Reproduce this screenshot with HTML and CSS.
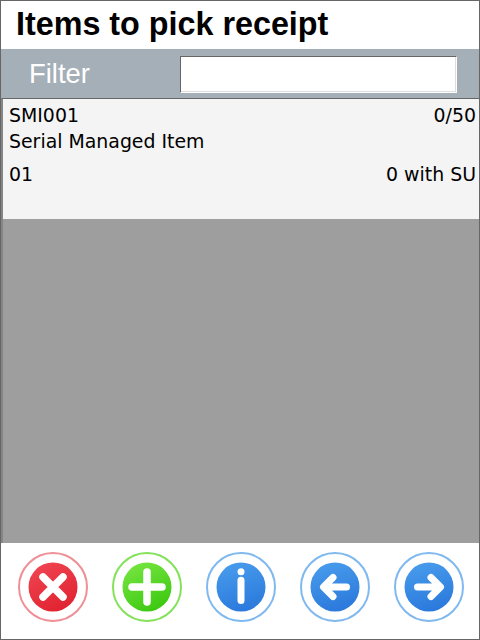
FILE: index.html
```html
<!DOCTYPE html>
<html lang="en">
<head>
  <meta charset="UTF-8">
  <meta name="viewport" content="width=device-width, initial-scale=1.0">
  <title>Items to pick receipt</title>
  <link rel="stylesheet" href="styles.css">
</head>
<body>
<div class="app">
  <!-- title -->
  <div class="header">Items to pick receipt</div>

  <!-- filter -->
  <div class="filter-bar">
    <label class="filter-label" for="filter">Filter</label>
    <input class="filter-input" id="filter" type="text">
  </div>

  <!-- list -->
  <div class="list">
    <div class="item">
      <div class="item-row">
        <span>SMI001</span>
        <span>0/50</span>
      </div>
      <div class="item-row">
        <span>Serial Managed Item</span>
      </div>
      <div class="item-row item-row-gap">
        <span>01</span>
        <span>0 with SU</span>
      </div>
    </div>
  </div>

  <!-- buttons -->
  <div class="toolbar">
    <button class="round-btn ring-red" type="button" aria-label="Cancel">
      <svg width="70" height="70" viewBox="0 0 70 70">
        <defs>
          <linearGradient id="redFill" x1="0.25" y1="0" x2="0.75" y2="1">
            <stop offset="0" stop-color="#f04451"/>
            <stop offset="1" stop-color="#e0212f"/>
          </linearGradient>
        </defs>
        <circle cx="35" cy="35" r="34" class="ring"/>
        <circle cx="35" cy="35" r="24.5" fill="url(#redFill)"/>
        <path d="M25 25 L45 45 M45 25 L25 45" class="glyph" stroke-width="7.5"/>
      </svg>
    </button>
    <button class="round-btn ring-green" type="button" aria-label="Add">
      <svg width="70" height="70" viewBox="0 0 70 70">
        <defs>
          <linearGradient id="greenFill" x1="0.25" y1="0" x2="0.75" y2="1">
            <stop offset="0" stop-color="#76e540"/>
            <stop offset="1" stop-color="#3ac70f"/>
          </linearGradient>
        </defs>
        <circle cx="35" cy="35" r="34" class="ring"/>
        <circle cx="35" cy="35" r="24.5" fill="url(#greenFill)"/>
        <path d="M35 20 V50 M20 35 H50" class="glyph" stroke-width="7.5"/>
      </svg>
    </button>
    <button class="round-btn ring-blue" type="button" aria-label="Info">
      <svg width="70" height="70" viewBox="0 0 70 70">
        <defs>
          <linearGradient id="blueFill" x1="0.35" y1="0" x2="0.65" y2="1">
            <stop offset="0" stop-color="#479beb"/>
            <stop offset="1" stop-color="#2a78dc"/>
          </linearGradient>
        </defs>
        <circle cx="35" cy="35" r="34" class="ring"/>
        <circle cx="35" cy="35" r="24.5" fill="url(#blueFill)"/>
        <circle cx="35" cy="19.7" r="3.5" fill="#fff"/>
        <path d="M35 28.2 V48.5" class="glyph" stroke-width="7"/>
      </svg>
    </button>
    <button class="round-btn ring-blue" type="button" aria-label="Back">
      <svg width="70" height="70" viewBox="0 0 70 70">
        <circle cx="35" cy="35" r="34" class="ring"/>
        <circle cx="35" cy="35" r="24.5" fill="url(#blueFill)"/>
        <path d="M33 25.5 L23.5 35 L33 44.5 M24 35 H46.5" class="glyph" stroke-width="7"/>
      </svg>
    </button>
    <button class="round-btn ring-blue" type="button" aria-label="Next">
      <svg width="70" height="70" viewBox="0 0 70 70">
        <circle cx="35" cy="35" r="34" class="ring"/>
        <circle cx="35" cy="35" r="24.5" fill="url(#blueFill)"/>
        <path d="M37 25.5 L46.5 35 L37 44.5 M46 35 H23.5" class="glyph" stroke-width="7"/>
      </svg>
    </button>
  </div>
</div>
</body>
</html>
```

FILE: styles.css
```css
* {
  margin: 0;
  padding: 0;
  box-sizing: border-box;
}

body {
  width: 480px;
  height: 640px;
  overflow: hidden;
}

.app {
  display: flex;
  flex-direction: column;
  height: 640px;
  border: 1px solid #666;
  background: #fff;
}

/* title */
.header {
  height: 48px;
  padding: 5px 0 0 15px;
  font-family: "Liberation Sans", Arial, sans-serif;
  font-size: 32.3px;
  font-weight: bold;
  line-height: 36px;
  color: #000;
}

/* filter */
.filter-bar {
  display: flex;
  align-items: center;
  height: 49px;
  padding: 2px 22px 0 28px;
  background: #a5afb7;
}

.filter-label {
  width: 151px;
  margin-bottom: 2px;
  font-family: "Liberation Sans", Arial, sans-serif;
  font-size: 27.4px;
  color: #fff;
}

.filter-input {
  width: 277px;
  height: 37px;
  background: #fff;
  border: 1px solid;
  border-color: #666 #fff #fff #666;
  box-shadow: inset -1px -1px 0 #ddd;
  outline: none;
}

/* list */
.list {
  flex: 1;
  background: #9e9e9e;
  border-top: 1px solid #666;
  border-left: 2px solid #858585;
}

.item {
  height: 120px;
  padding: 3px 3px 0 6px;
  background: #f4f4f4;
  font-family: "DejaVu Sans", Verdana, sans-serif;
  font-size: 18.9px;
  line-height: 26px;
  color: #000;
}

.item-row {
  display: flex;
  justify-content: space-between;
}

.item-row-gap {
  margin-top: 7px;
}

/* buttons */
.toolbar {
  display: flex;
  gap: 24px;
  align-items: center;
  height: 96px;
  padding: 0 0 8px 17px;
  background: #fff;
}

.round-btn {
  display: block;
  width: 70px;
  height: 70px;
  background: none;
  border: none;
  cursor: pointer;
}

.round-btn svg {
  display: block;
}

.ring {
  fill: none;
  stroke-width: 2;
}

.ring-red .ring {
  stroke: #ef8f96;
}

.ring-green .ring {
  stroke: #83e25a;
}

.ring-blue .ring {
  stroke: #7fb9f0;
}

.glyph {
  fill: none;
  stroke: #fff;
  stroke-linecap: round;
  stroke-linejoin: round;
}
```
